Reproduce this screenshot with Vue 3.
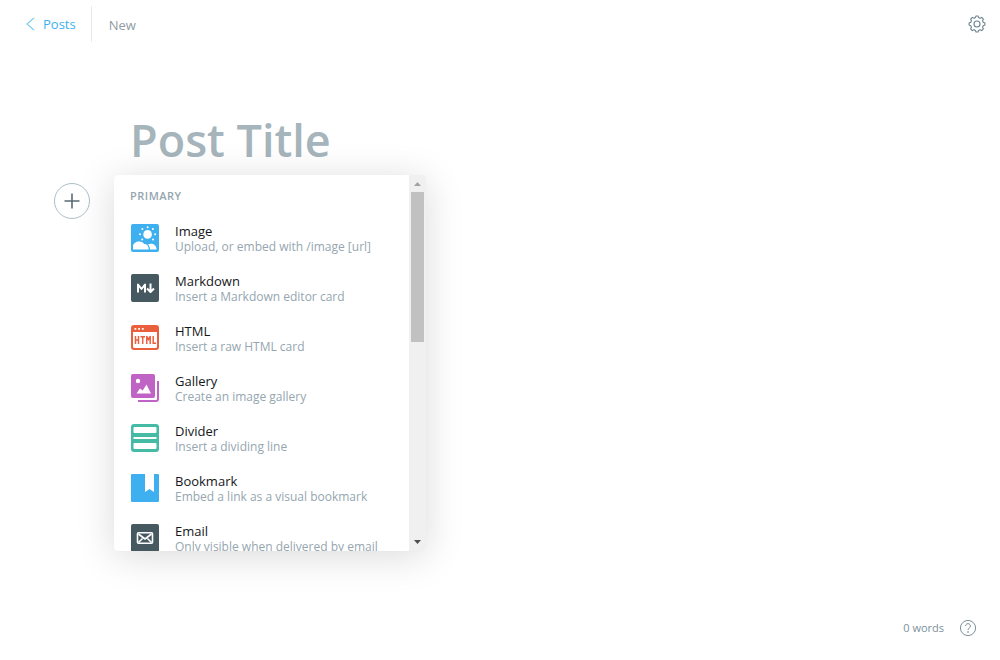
<script setup>
import { ref } from 'vue'

const title = ref('')
const cards = [
  { id: 'image', name: 'Image', text: 'Upload, or embed with /image [url]' },
  { id: 'markdown', name: 'Markdown', text: 'Insert a Markdown editor card' },
  { id: 'html', name: 'HTML', text: 'Insert a raw HTML card' },
  { id: 'gallery', name: 'Gallery', text: 'Create an image gallery' },
  { id: 'divider', name: 'Divider', text: 'Insert a dividing line' },
  { id: 'bookmark', name: 'Bookmark', text: 'Embed a link as a visual bookmark' },
  { id: 'email', name: 'Email', text: 'Only visible when delivered by email' },
]
</script>

<template>
  <div class="editor">
    <header class="topbar">
      <nav class="crumbs">
        <a href="#posts" class="back">
          <svg width="10" height="14" viewBox="0 0 10 14" fill="none" stroke="#7fcbf5" stroke-width="1.1"><path d="M9 1 2 7l7 6" /></svg>
          <span>Posts</span>
        </a>
        <span class="status">New</span>
      </nav>
      <button class="plain" type="button" aria-label="Settings">
        <svg width="18" height="18" viewBox="0 0 18 18" fill="none" stroke="#6b8390" stroke-width="1.1" stroke-linejoin="round">
          <circle cx="9" cy="9" r="3" />
          <path d="M7.4 2.6 8 1h2l.6 1.6 1.3.6 1.8-.8 1.7 1.7-.8 1.7.6 1.4 1.7.7v2.2l-1.7.7-.6 1.4.8 1.7-1.7 1.7-1.8-.8-1.3.6L10 17H8l-.6-1.6-1.3-.6-1.8.8-1.7-1.7.8-1.7-.6-1.4-1.7-.7V7.9l1.7-.7.6-1.4-.8-1.7 1.7-1.7 1.8.8z" />
        </svg>
      </button>
    </header>

    <main class="canvas">
      <input v-model="title" class="title" type="text" placeholder="Post Title" aria-label="Post Title" />
      <div class="inserter">
        <button class="plus" type="button" aria-label="Add a card">
          <svg width="16" height="16" viewBox="0 0 16 16" stroke="#5a6b73" stroke-width="1.6"><path d="M8 .5v15M.5 8h15" /></svg>
        </button>
        <div class="menu">
          <div class="cards">
            <h2>Primary</h2>
            <button v-for="card in cards" :key="card.id" class="card" type="button">
              <svg class="icon" width="28" height="28" viewBox="0 0 28 28">
                <g v-if="card.id === 'image'" fill="#fff">
                  <rect width="28" height="28" rx="2" fill="#3eb0ef" />
                  <circle cx="16.6" cy="10.4" r="4.3" />
                  <circle cx="16.6" cy="3.2" r="1" /><circle cx="11.4" cy="5" r="1" /><circle cx="21.9" cy="5" r="1" />
                  <circle cx="9" cy="10.3" r="1" /><circle cx="24.1" cy="10.3" r="1" />
                  <circle cx="11.2" cy="15.4" r="1" /><circle cx="22" cy="15.4" r="1" />
                  <path d="M2 25.5v-3c0-3 3-5 6.2-5 2.400 0 4 1 5 2.500 3 0 4.500 2.200 4.500 5.500z" />
                  <path d="M17 20.200c3.800-1.400 8.600 0 8.600 5.300H19c0-2-.7-3.800-2-5.300z" />
                </g>
                <g v-else-if="card.id === 'markdown'" fill="none" stroke="#fff" stroke-width="2" stroke-linejoin="round">
                  <rect width="28" height="28" rx="2" fill="#465961" stroke="none" />
                  <path d="M7 18.500v-8l3.500 4.500 3.500-4.500v8M19.500 9.500v8M16 14.500l3.500 3.500 3.500-3.500" />
                </g>
                <g v-else-if="card.id === 'html'">
                  <rect y="1" width="28" height="25" rx="3" fill="#ea5f3c" />
                  <path d="M2 8h24v14.500a1.500 1.500 0 0 1-1.500 1.500h-21A1.500 1.500 0 0 1 2 22.500z" fill="#fff" />
                  <path d="M3.500 4.800h1.800M7.200 4.800h1.800M10.900 4.800h1.800" stroke="#fff" stroke-width="1.800" />
                  <path d="M4.500 12v8M7.500 12v8M4.500 16h3M9.500 12.700h4.500M11.700 12v8M15.800 20v-8M19.200 20v-8M16 13l1.500 2.500L19 13M22.200 12v7.300h2.800" fill="none" stroke="#ea5f3c" stroke-width="1.500" />
                </g>
                <g v-else-if="card.id === 'gallery'">
                  <rect width="24" height="24" rx="2" fill="#bf63c4" />
                  <path d="M27 7v18a2 2 0 0 1-2 2H7" fill="none" stroke="#bf63c4" stroke-width="2" />
                  <circle cx="7" cy="7" r="2.200" fill="#fff" />
                  <path d="m5.500 19.500 3.500-5 2.700 2 3.800-6 4.500 9z" fill="#fff" />
                </g>
                <g v-else-if="card.id === 'divider'" fill="#fff">
                  <rect width="28" height="28" rx="3" fill="#45bba6" />
                  <rect x="2.500" y="3" width="23" height="6" rx="1" />
                  <rect x="2.500" y="13" width="23" height="2" />
                  <rect x="2.500" y="19" width="23" height="6" rx="1" />
                </g>
                <g v-else-if="card.id === 'bookmark'">
                  <rect width="28" height="28" rx="1" fill="#3eb0ef" />
                  <path d="M14 0h9v18l-4.500-3-4.500 3z" fill="#fff" />
                </g>
                <g v-else fill="none" stroke="#fff" stroke-width="1.600" stroke-linejoin="round">
                  <rect width="28" height="28" rx="2" fill="#465961" stroke="none" />
                  <rect x="6.500" y="8.800" width="15" height="10.400" rx="1" />
                  <path d="m7.500 10 6.500 5 6.500-5M7.500 18.500l4-4M20.500 18.500l-4-4" />
                </g>
              </svg>
              <span class="label">
                <span class="name">{{ card.name }}</span>
                <span class="text">{{ card.text }}</span>
              </span>
            </button>
          </div>
          <div class="scrollbar" aria-hidden="true">
            <svg width="7" height="4" viewBox="0 0 7 4"><path d="M3.500 0 7 4H0z" fill="#a3a3a3" /></svg>
            <div class="track"><div class="thumb"></div></div>
            <svg width="7" height="4" viewBox="0 0 7 4"><path d="M3.500 4 7 0H0z" fill="#505050" /></svg>
          </div>
        </div>
      </div>
    </main>

    <footer class="footer">
      <span>0 words</span>
      <a href="#help" aria-label="Help">
        <svg width="18" height="18" viewBox="0 0 18 18" fill="none" stroke="#7c919b" stroke-width="1">
          <circle cx="9" cy="9" r="7.600" />
          <path d="M6.600 7a2.400 2.400 0 1 1 3.600 2.100c-.8.500-1.200.9-1.200 1.900" />
          <circle cx="9" cy="13" r=".4" fill="#7c919b" />
        </svg>
      </a>
    </footer>
  </div>
</template>

<style>
body {
  margin: 0;
  background: #fff;
}
</style>

<style scoped>
.editor {
  display: flex;
  flex-direction: column;
  min-height: 100vh;
  font-family: "Open Sans", "Noto Sans", sans-serif;
  color: #15171a;
}
button,
input {
  font: inherit;
  border: 0;
  background: none;
  padding: 0;
  margin: 0;
}
svg {
  display: block;
  flex: none;
}
.topbar {
  display: flex;
  align-items: center;
  justify-content: space-between;
  padding: 6px 14px 6px 25px;
  font-size: 13px;
  line-height: 20px;
}
.crumbs {
  display: flex;
  align-items: center;
}
.back {
  display: flex;
  align-items: center;
  gap: 8px;
  height: 36px;
  padding-right: 15px;
  border-right: 1px solid #e5eaed;
  color: #3eb0ef;
  text-decoration: none;
}
.status {
  padding: 2px 0 0 17px;
  color: #8e9ca3;
}
.canvas {
  padding: 59px 54px 0;
}
.title {
  display: block;
  box-sizing: border-box;
  width: 100%;
  height: 64px;
  padding-left: 76px;
  font-size: 45px;
  font-weight: 600;
  outline: none;
}
.title::placeholder {
  color: #a6b4bb;
  opacity: 1;
}
.inserter {
  position: relative;
  padding-top: 12px;
}
.plus {
  display: flex;
  align-items: center;
  justify-content: center;
  box-sizing: border-box;
  width: 36px;
  height: 36px;
  border: 1px solid #aebdc4;
  border-radius: 50%;
}
.menu {
  position: absolute;
  top: 4px;
  left: 60px;
  display: flex;
  width: 312px;
  height: 376px;
  overflow: hidden;
  border-radius: 4px;
  background: #fff;
  box-shadow: 0 0 1px rgba(0, 0, 0, 0.05), 0 5px 38px rgba(0, 0, 0, 0.15);
}
.cards {
  flex: 1;
  min-width: 0;
  overflow: hidden;
}
h2 {
  margin: 0;
  padding: 12px 16px 9px;
  font-size: 11px;
  line-height: 17px;
  font-weight: 600;
  letter-spacing: 0.5px;
  text-transform: uppercase;
  color: #95a6af;
}
.card {
  display: flex;
  align-items: center;
  gap: 16px;
  width: 100%;
  height: 50px;
  padding: 0 17px;
  text-align: left;
}
.label {
  display: flex;
  flex-direction: column;
  padding-top: 1px;
  white-space: nowrap;
}
.name {
  font-size: 13px;
  line-height: 16px;
  color: #15171a;
}
.text {
  font-size: 12px;
  line-height: 15px;
  color: #95a6af;
}
.scrollbar {
  display: flex;
  flex-direction: column;
  align-items: center;
  box-sizing: border-box;
  width: 17px;
  padding: 7px 0;
  background: #f0f0f0;
}
.track {
  flex: 1;
  width: 13px;
  padding: 6px 0;
}
.thumb {
  height: 150px;
  background: #c1c1c1;
}
.footer {
  display: flex;
  align-items: center;
  justify-content: flex-end;
  gap: 15px;
  margin-top: auto;
  padding: 0 23px 23px;
  font-size: 11px;
  line-height: 18px;
  color: #7c919b;
}
</style>
